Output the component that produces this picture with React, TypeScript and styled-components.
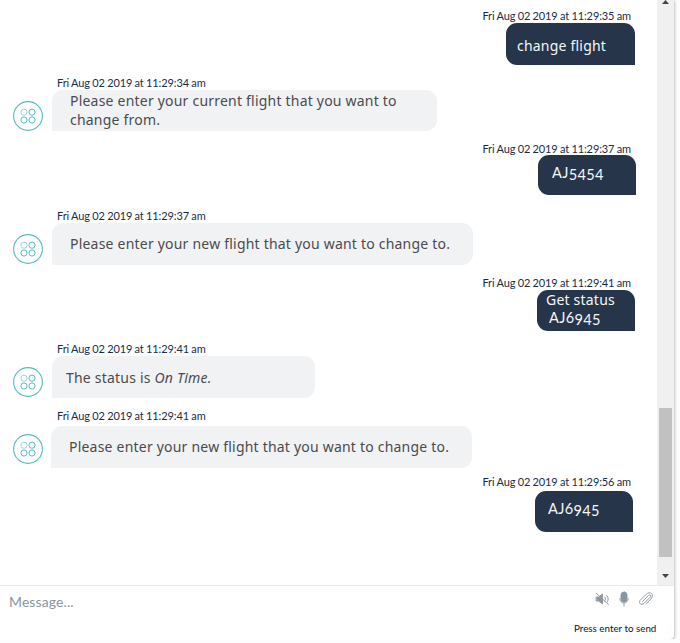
import React from "react";
import styled, { createGlobalStyle } from "styled-components";

const Global = createGlobalStyle`
  * { box-sizing: border-box; }
  body { margin: 0; background: #fdfdfd; overflow: hidden; font-family: Lato, sans-serif; }
`;

const Window = styled.main`
  width: 674px;
  height: 639px;
  display: flex;
  flex-direction: column;
  background: #fff;
  border-radius: 0 0 4px 0;
  box-shadow: 0 1px 3px rgba(70, 85, 100, 0.5), 0 0 5px rgba(0, 0, 0, 0.12);
`;

const Conversation = styled.section`
  height: 585px;
  display: flex;
`;

const Messages = styled.div`
  flex: 1;
  padding-top: 9px;
  overflow: hidden;
`;

const Message = styled.article<{ $height: number }>`
  height: ${(p) => p.$height}px;
`;

const Timestamp = styled.time<{ $own?: boolean }>`
  display: block;
  height: 14px;
  padding: 0 26px 0 57px;
  text-align: ${(p) => (p.$own ? "right" : "left")};
  font-size: 11px;
  line-height: 14px;
  letter-spacing: -0.11px;
  word-spacing: -0.35px;
  white-space: nowrap;
  color: #1c2b45;
`;

const MessageLine = styled.div<{ $own?: boolean; $inset: number; $gap: number }>`
  display: flex;
  justify-content: ${(p) => (p.$own ? "flex-end" : "flex-start")};
  align-items: flex-start;
  padding-left: ${(p) => (p.$own ? 0 : 13)}px;
  padding-right: ${(p) => (p.$own ? p.$inset : 0)}px;
  margin-top: ${(p) => p.$gap}px;
`;

const Avatar = styled.svg<{ $top: number; $gap: number }>`
  flex: none;
  width: 30px;
  height: 30px;
  margin-top: ${(p) => p.$top}px;
  margin-right: ${(p) => p.$gap}px;
  fill: none;
  stroke: #55bcc4;
`;

const Bubble = styled.div<{ $own?: boolean; $w: number; $h: number; $left: number; $top: number }>`
  width: ${(p) => p.$w}px;
  height: ${(p) => p.$h}px;
  padding: ${(p) => p.$top}px 0 0 ${(p) => p.$left}px;
  border-radius: ${(p) => (p.$own ? "11px 11px 0 11px" : "11px 11px 11px 1px")};
  background: ${(p) => (p.$own ? "#27354a" : "#f1f2f4")};
  color: ${(p) => (p.$own ? "#f5f6f8" : "#4b4b4e")};
  font-family: "Noto Sans", sans-serif;
  font-size: 14px;
  line-height: 19px;
`;

const TextLine = styled.div<{ $indent?: number }>`
  height: 19px;
  white-space: pre;
  letter-spacing: 0.21px;
  padding-left: ${(p) => p.$indent ?? 0}px;
`;

const FlightCode = styled.div<{ $indent?: number }>`
  height: 19px;
  padding-left: ${(p) => p.$indent ?? 0}px;
  font-family: Lato, sans-serif;
  font-size: 14.6px;
  line-height: 18px;
  letter-spacing: 0.3px;
`;

const LowDigits = styled.span`
  position: relative;
  top: 2px;
`;

const Scrollbar = styled.div`
  width: 17px;
  display: flex;
  flex-direction: column;
  align-items: center;
  background: #f0f0f0;
`;

const Arrow = styled.svg`
  flex: none;
  width: 9px;
  height: 5px;
  fill: #444;
`;

const Thumb = styled.div`
  width: 13px;
  height: 149px;
  margin: 403px 0 16px;
  background: #c1c1c1;
`;

const Composer = styled.footer`
  flex: 1;
  display: flex;
  justify-content: space-between;
  border-top: 1px solid #e8eaeb;
`;

const Input = styled.div`
  padding: 7px 0 0 9px;
  color: #8b96a0;
  font-size: 14px;
  line-height: 18px;
  letter-spacing: 0.1px;
`;

const Actions = styled.div`
  width: 100px;
  padding-right: 18px;
`;

const Icons = styled.div`
  display: flex;
  justify-content: flex-end;
  height: 33px;
  padding: 5px 2px 0 0;
  gap: 6px;
`;

const Icon = styled.svg`
  width: 16px;
  height: 16px;
  fill: none;
  stroke: #929ca2;
  stroke-linecap: round;
  stroke-linejoin: round;
`;

const Hint = styled.div`
  text-align: right;
  font-size: 9.8px;
  line-height: 18px;
  white-space: nowrap;
  color: #0c1523;
`;

function BotAvatar({ top, gap }: { top: number; gap: number }) {
  return (
    <Avatar viewBox="0 0 30 30" $top={top} $gap={gap}>
      <circle cx="15" cy="15" r="14.4" strokeWidth="1.1" />
      <circle cx="11" cy="11.2" r="3.1" opacity=".6" />
      <circle cx="19" cy="11.2" r="3.1" />
      <circle cx="11" cy="19" r="3.1" />
      <circle cx="19" cy="19" r="3.1" />
    </Avatar>
  );
}

interface Entry {
  time: string;
  own?: boolean;
  height: number;
  gap: number;
  inset?: number;
  avatar?: number;
  w: number;
  h: number;
  left: number;
  top: number;
  body: React.ReactNode;
}

const entries: Entry[] = [
  { time: "11:29:35", own: true, height: 67, gap: 0, inset: 22, w: 129, h: 42, left: 11, top: 13, body: <TextLine>change flight</TextLine> },
  {
    time: "11:29:34", height: 66, gap: 0, avatar: 11, w: 385, h: 41, left: 18, top: 1,
    body: <><TextLine>Please enter your current flight that you want to</TextLine><TextLine>change from.</TextLine></>,
  },
  { time: "11:29:37", own: true, height: 67, gap: -1, inset: 21, w: 98, h: 40, left: 14, top: 9, body: <FlightCode>AJ<LowDigits>5454</LowDigits></FlightCode> },
  { time: "11:29:37", height: 67, gap: 0, avatar: 11, w: 421, h: 42, left: 18, top: 11, body: <TextLine>Please enter your new flight that you want to change to.</TextLine> },
  {
    time: "11:29:41", own: true, height: 66, gap: 0, inset: 22, w: 98, h: 41, left: 9, top: 0,
    body: <><TextLine>Get status</TextLine><FlightCode $indent={3}>AJ6<LowDigits>945</LowDigits></FlightCode></>,
  },
  { time: "11:29:41", height: 67, gap: 0, avatar: 11, w: 263, h: 42, left: 14, top: 12, body: <TextLine>The status is <i>On Time.</i></TextLine> },
  { time: "11:29:41", height: 66, gap: 3, avatar: 8, w: 421, h: 42, left: 18, top: 11, body: <TextLine>Please enter your new flight that you want to change to.</TextLine> },
  { time: "11:29:56", own: true, height: 67, gap: 2, inset: 24, w: 98, h: 41, left: 13, top: 9, body: <FlightCode>AJ6<LowDigits>945</LowDigits></FlightCode> },
];

export default function App() {
  return (
    <>
      <Global />
      <Window>
        <Conversation>
          <Messages>
            {entries.map((e, i) => (
              <Message key={i} $height={e.height}>
                <Timestamp $own={e.own}>Fri Aug 02 2019 at {e.time} am</Timestamp>
                <MessageLine $own={e.own} $inset={e.inset ?? 0} $gap={e.gap}>
                  {!e.own && <BotAvatar top={e.avatar ?? 11} gap={i === 6 ? 8 : 9} />}
                  <Bubble $own={e.own} $w={e.w} $h={e.h} $left={e.left} $top={e.top}>{e.body}</Bubble>
                </MessageLine>
              </Message>
            ))}
          </Messages>
          <Scrollbar>
            <Arrow viewBox="0 0 9 5"><path d="M1 4 4.5 0 8 4Z" /></Arrow>
            <Thumb />
            <Arrow viewBox="0 0 9 5"><path d="M1 1h7L4.5 5Z" /></Arrow>
          </Scrollbar>
        </Conversation>
        <Composer>
          <Input>Message...</Input>
          <Actions>
            <Icons>
              <Icon viewBox="0 0 16 16">
                <path d="M2.500 6h2.300L8.500 3v10L4.800 10H2.500Z" fill="#929699" />
                <path d="M2.500 2.500 14.500 13.500M10.700 6c1 1 1 3 0 4M12.700 4.500c2 2 2 5 0 7" />
              </Icon>
              <Icon viewBox="0 0 16 16">
                <rect x="5" y="1" width="6" height="10" rx="3" fill="#8796a2" />
                <path d="M3.800 7.500c0 6 8.400 6 8.400 0M8 12v3" />
              </Icon>
              <Icon viewBox="0 0 16 16">
                <path d="m4.500 10.500 6-6c1.500-1.300 3 .2 1.700 1.700L6 12.400c-2.700 2.500-6-.5-3.700-3.200l6-6c4-3.700 8.400.5 4.700 4.700L8.500 12.500" />
              </Icon>
            </Icons>
            <Hint>Press enter to send</Hint>
          </Actions>
        </Composer>
      </Window>
    </>
  );
}
